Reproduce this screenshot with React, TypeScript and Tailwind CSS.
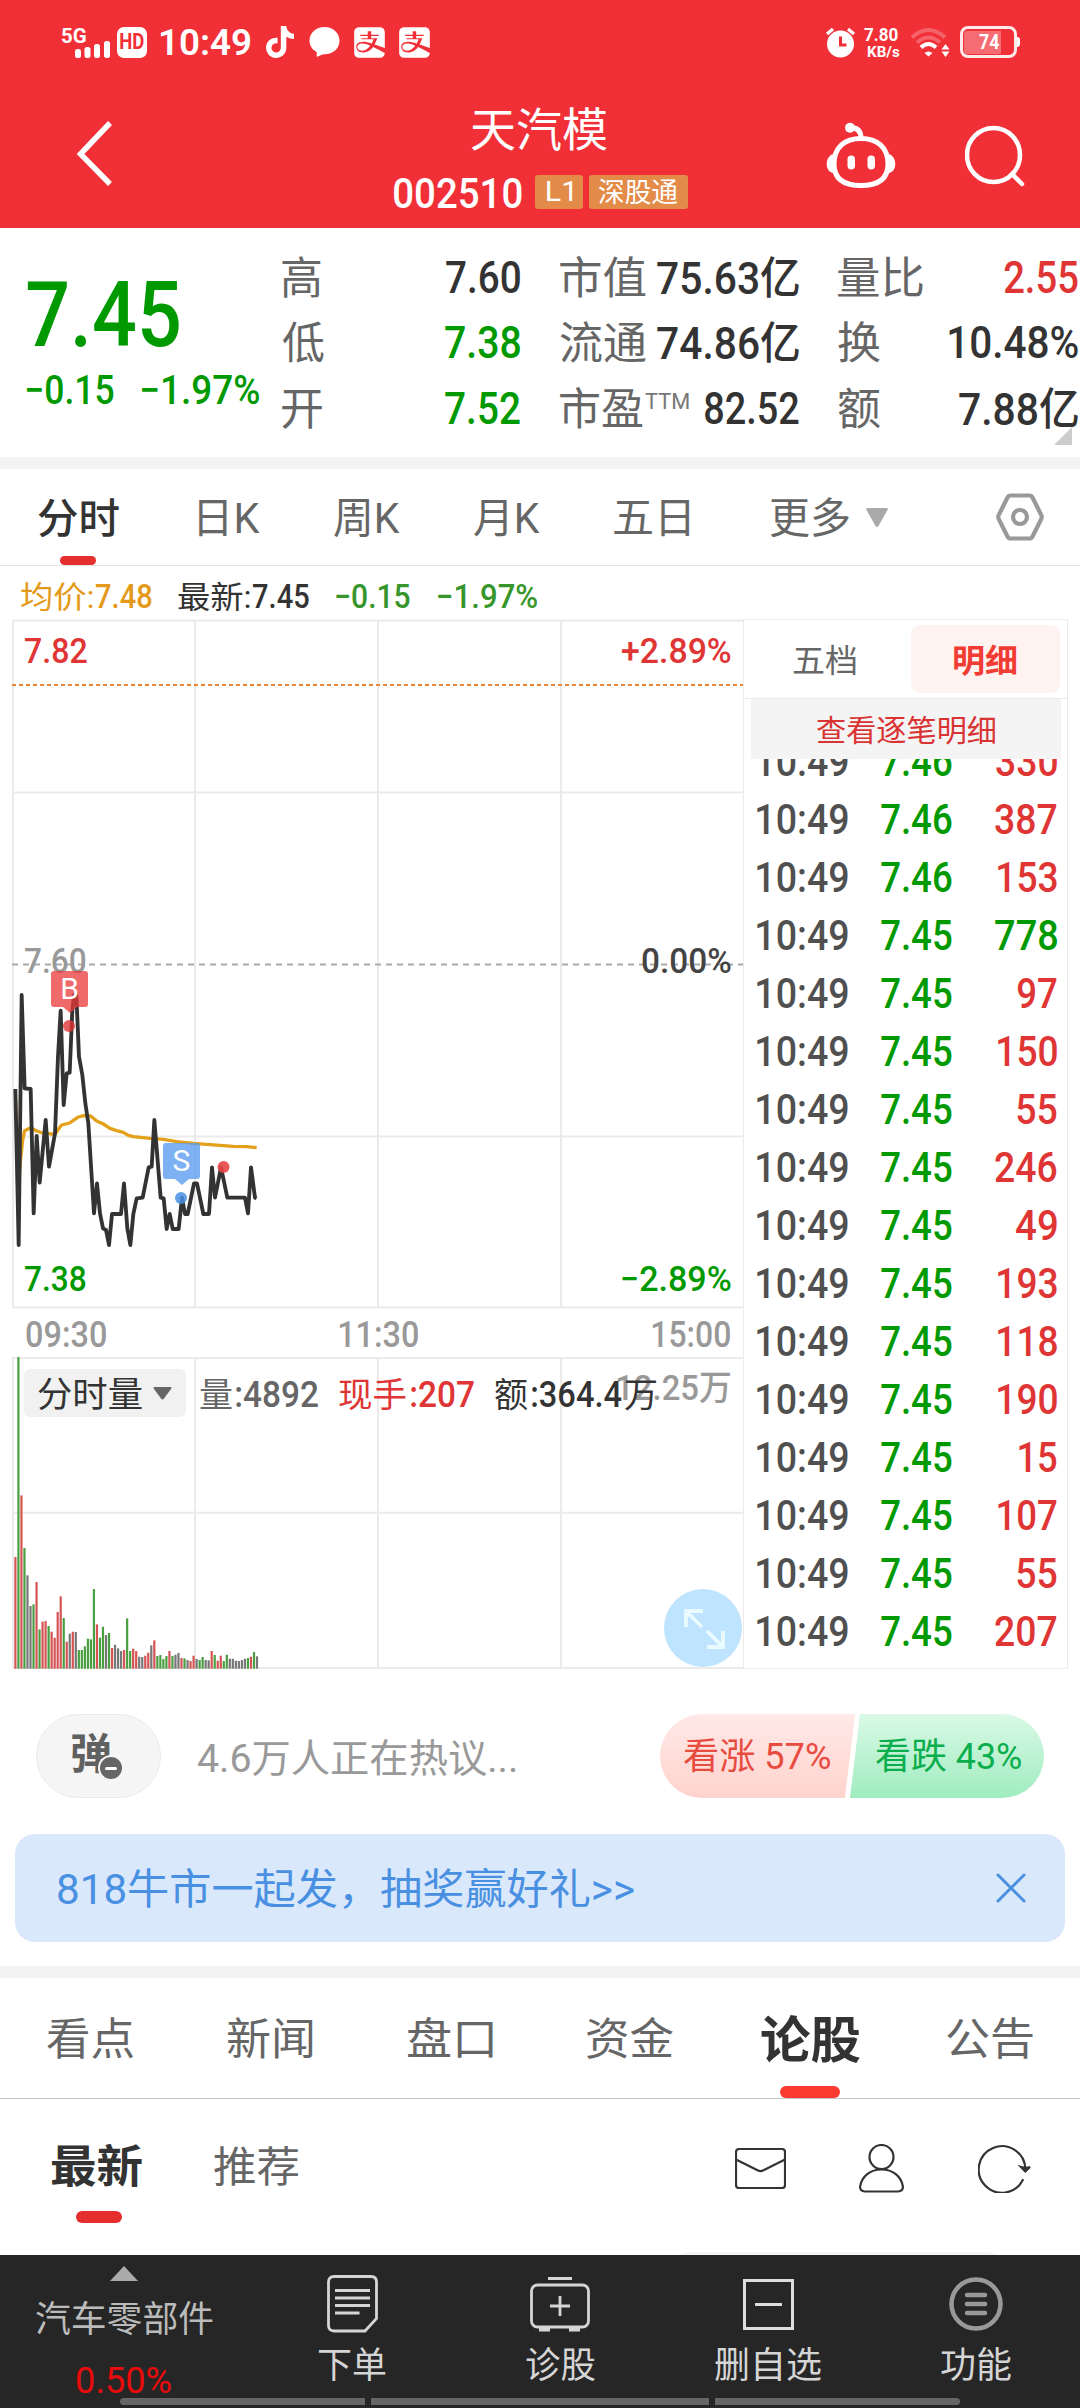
import { useLayoutEffect, useRef, type ReactNode } from "react";
import { FaTiktok } from "react-icons/fa6";
import { FaAlipay } from "react-icons/fa";

/** Text whose visible width is condensed or stretched to `w` pixels. */
function Fit({ w, className = "", children }: { w: number; className?: string; children: string }) {
  const ref = useRef<HTMLSpanElement>(null);
  useLayoutEffect(() => {
    const el = ref.current;
    const ctx = document.createElement("canvas").getContext("2d");
    if (!el || !ctx) return;
    const cs = getComputedStyle(el);
    ctx.font = `${cs.fontWeight} ${cs.fontSize} ${cs.fontFamily}`;
    const m = ctx.measureText(children);
    const k = w / (m.actualBoundingBoxLeft + m.actualBoundingBoxRight);
    // Han glyphs sit slightly higher than digits on the shared baseline.
    const dy = /[\u4e00-\u9fff]/.test(children) ? 2 : 1;
    el.style.transform = `translate(${m.actualBoundingBoxLeft * k}px, ${dy}px) scaleX(${k})`;
  }, [w, children]);
  return (
    <span className={`block shrink-0 leading-none ${className}`} style={{ width: w }}>
      <span ref={ref} className="inline-block origin-left whitespace-nowrap">
        {children}
      </span>
    </span>
  );
}

const GREEN = "text-[#009900]";
const RED = "text-[#e03535]";
const DARK = "text-[#333333]";

function StatusBar() {
  return (
    <div className="flex h-[84px] items-center text-white">
      <div className="relative ml-[62px] h-[32px] w-[49px]">
        <Fit w={24} className="-mt-px text-[20px] font-bold">5G</Fit>
        <svg className="absolute top-[15px] left-[13px]" width="36" height="18" viewBox="0 0 36 18" fill="#fff">
          <rect x="0" y="8" width="6" height="9" rx="2.5" />
          <rect x="9.5" y="6" width="6" height="11" rx="2.5" />
          <rect x="19" y="3" width="6" height="14" rx="2.5" />
          <rect x="29" y="0" width="6" height="17" rx="2.5" />
        </svg>
      </div>
      <div className="ml-[6px] flex h-[31px] w-[30px] items-center justify-center rounded-[7px] bg-white text-[#f12f37]">
        <Fit w={24} className="-mt-[2px] text-[22px] font-bold">HD</Fit>
      </div>
      <Fit w={90} className="-mt-[2px] ml-[14px] text-[37px] font-semibold">10:49</Fit>
      <FaTiktok className="ml-[15px] h-[32px] w-[28px]" />
      <svg className="ml-[15px]" width="31" height="31" viewBox="0 0 31 31" fill="#fff">
        <path d="M15.500 0C24 0 30.500 6 30.500 13.800S24 27.300 15.500 27.300c-1.200 0-2.300.2-3.300.7L7.700 30V25C3.200 22.700.5 18.700.5 13.800.5 6 7 0 15.500 0z" />
      </svg>
      <FaAlipay className="ml-[12px] size-[35px]" />
      <FaAlipay className="ml-[10px] size-[35px]" />
      <svg className="ml-auto" width="31" height="31" viewBox="0 0 31 31" fill="none">
        <circle cx="15.500" cy="17" r="13.500" fill="#fff" />
        <path d="M2 7l6-5M29 7l-6-5" stroke="#fff" strokeWidth="3.400" />
        <path d="M15.500 9.500v8.500h6" stroke="#f12f37" strokeWidth="3" />
      </svg>
      <div className="ml-[8px] flex flex-col items-end gap-[1px]">
        <Fit w={34} className="-mt-px mr-[2px] text-[18px] font-bold">7.80</Fit>
        <Fit w={33} className="text-[15px] font-bold">KB/s</Fit>
      </div>
      <svg className="ml-[10px]" width="40" height="31" viewBox="0 0 40 31" fill="none" stroke="#fff" strokeWidth="4">
        <path d="M2 10.500Q18.500-4.500 35 10.500" opacity=".25" />
        <path d="M7 15.500Q18.500 5.500 30 15.500" opacity=".25" />
        <path d="M11 20.500Q18.500 13.500 26 20.500" />
        <path d="M14.500 26Q18.500 23 22.500 26L18.500 29.500z" fill="#fff" stroke="none" />
        <path d="M31.500 22.500l4-5.500 4 5.500zM31.500 24.500l4 5.500 4-5.500z" fill="#fff" stroke="none" />
      </svg>
      <div className="relative mr-[63px] ml-[10px] flex h-[32px] w-[57px] items-center justify-center rounded-[8px] border-[3px] border-white/90">
        <div className="absolute top-[1.500px] bottom-[1.500px] left-[1px] w-[37px] rounded-l-[3px] bg-white/30" />
        <div className="absolute top-[8px] -right-[6px] h-[10px] w-[3px] rounded-r bg-white" />
        <Fit w={20} className="relative -mt-[2px] text-[20px] font-bold">74</Fit>
      </div>
    </div>
  );
}

function Header() {
  return (
    <header className="h-[228px] bg-[#f12f37]">
      <StatusBar />
      <div className="flex h-[144px] text-white">
        <svg className="mt-[35px] ml-[76px]" width="40" height="70" viewBox="0 0 40 70" fill="none" stroke="#fff" strokeWidth="5.500">
          <path d="M34 4L4.500 35 34 65" />
        </svg>
        <div className="ml-[277px] flex w-[296px] flex-col">
          <Fit w={136} className="mt-[21px] ml-[78px] text-[46px]">天汽模</Fit>
          <div className="mt-[24px] flex h-[34px] items-center">
            <Fit w={128} className="ml-[1px] text-[43px] font-medium">002510</Fit>
            <div className="ml-[13px] flex h-[34px] w-[48px] items-center justify-center rounded-[3px] bg-[#e38b48]">
              <Fit w={25} className="-mt-[2px] text-[28px]">L1</Fit>
            </div>
            <div className="ml-[6px] flex h-[34px] w-[99px] items-center justify-center rounded-[3px] bg-[#e38b48]">
              <Fit w={79} className="-mt-[2px] text-[27px]">深股通</Fit>
            </div>
          </div>
        </div>
        <svg className="mt-[38px] ml-[137px]" width="70" height="66" viewBox="0 0 70 66" fill="none" stroke="#fff" strokeWidth="5">
          <path d="M35 16.500C51 16.500 62 25 62 42 62 57 52 63.500 35 63.500S8 57 8 42C8 25 19 16.500 35 16.500z" />
          <path d="M35 16C35 9 31 5.500 24 5.500" />
          <circle cx="24" cy="5.800" r="5" fill="#fff" stroke="none" />
          <path d="M7.500 32C-1.500 34-1.500 50 7.500 51zM62.500 32C71.500 34 71.500 50 62.500 51z" fill="#fff" stroke="none" />
          <rect x="21.500" y="33.500" width="7.500" height="14" rx="3.700" fill="#fff" stroke="none" />
          <rect x="41.500" y="33.500" width="7.500" height="14" rx="3.700" fill="#fff" stroke="none" />
        </svg>
        <svg className="mt-[40px] ml-[69px]" width="64" height="66" viewBox="0 0 64 66" fill="none" stroke="#fff" strokeWidth="4.500">
          <ellipse cx="28.500" cy="31" rx="26.500" ry="27" />
          <path d="M47 50l10 10" strokeLinecap="round" />
        </svg>
      </div>
    </header>
  );
}

function Stat({ label, lw, value, w, color = DARK, sup }: { label: string; lw: number; value: string; w: number; color?: string; sup?: boolean }) {
  return (
    <div className="flex h-[65.500px] items-center">
      <Fit w={lw} className="text-[44px] text-[#666666]">{label}</Fit>
      {sup && <Fit w={44} className="mb-[14px] ml-[2px] text-[22px] text-[#777777]">TTM</Fit>}
      <Fit w={w} className={`ml-auto text-[44px] font-medium ${color}`}>{value}</Fit>
    </div>
  );
}

function Quote() {
  return (
    <section className="relative flex h-[229px] pt-[16px]">
      <div className="w-[282px] pl-[27px]">
        <Fit w={152} className={`mt-[26px] text-[90px] font-medium ${GREEN}`}>7.45</Fit>
        <div className="mt-[10px] flex">
          <Fit w={87} className={`text-[40px] font-medium ${GREEN}`}>−0.15</Fit>
          <Fit w={117} className={`ml-[28px] text-[40px] font-medium ${GREEN}`}>−1.97%</Fit>
        </div>
      </div>
      <div className="w-[238px]">
        <Stat label="高" lw={39} value="7.60" w={74} />
        <Stat label="低" lw={42} value="7.38" w={75} color={GREEN} />
        <Stat label="开" lw={40} value="7.52" w={75} color={GREEN} />
      </div>
      <div className="ml-[40px] w-[239px]">
        <Stat label="市值" lw={86} value="75.63亿" w={142} />
        <Stat label="流通" lw={86} value="74.86亿" w={142} />
        <Stat label="市盈" lw={83} value="82.52" w={94} sup />
      </div>
      <div className="ml-[39px] w-[240px]">
        <Stat label="量比" lw={85} value="2.55" w={74} color={RED} />
        <Stat label="换" lw={42} value="10.48%" w={129} />
        <Stat label="额" lw={42} value="7.88亿" w={119} />
      </div>
      <svg className="absolute right-[8px] bottom-[12px]" width="18" height="18" viewBox="0 0 18 18" fill="#cccccc">
        <path d="M18 0v18H0z" />
      </svg>
    </section>
  );
}

function PeriodTabs() {
  const tab = "text-[42px] text-[#666666]";
  return (
    <nav className="relative flex h-[97px] items-center border-b border-[#e5e5e5] pl-[38px]">
      <Fit w={81} className={`text-[41px] font-medium ${DARK}`}>分时</Fit>
      <Fit w={61} className={`ml-[80px] ${tab}`}>日K</Fit>
      <Fit w={66} className={`ml-[74px] ${tab}`}>周K</Fit>
      <Fit w={66} className={`ml-[74px] ${tab}`}>月K</Fit>
      <Fit w={75} className={`ml-[74px] ${tab}`}>五日</Fit>
      <Fit w={79} className={`ml-[81px] ${tab}`}>更多</Fit>
      <svg className="ml-[17px]" width="22" height="19" viewBox="0 0 22 19" fill="#aaaaaa">
        <path d="M1.500 0h19q2 0 1 2L12.500 18q-1.500 2-3 0L.5 2q-1-2 1-2z" />
      </svg>
      <svg className="ml-[108px]" width="48" height="48" viewBox="0 0 48 48" fill="none" stroke="#999999" strokeWidth="4.200">
        <path d="M14.500 2.500h19q2 0 3 2L45 21.500q1.500 2.500 0 5L36.500 43.500q-1 2-3 2h-19q-2 0-3-2L3 26.500q-1.500-2.500 0-5L11.500 4.500q1-2 3-2z" />
        <circle cx="24" cy="24" r="7" />
      </svg>
      <div className="absolute bottom-0 left-[60px] h-[9px] w-[36px] rounded-full bg-[#e52f2f]" />
    </nav>
  );
}

const PRICE =
  "46,567 56,1035 65,285 74,565 92,567 101,940 110,708 119,848 137,660 147,800 165,700 174,470 182,332 191,615 200,520 209,518 217,330 222,285 229,285 237,470 247,525 256,610 265,670 282,940 291,850 300,940 309,985 318,990 327,1035 336,942 363,942 372,850 382,985 391,1035 400,942 410,895 428,893 446,802 455,800 463,660 482,893 491,895 500,987 509,942 518,987 536,987 546,893 555,942 563,942 582,850 591,850 610,942 627,942 636,802 645,893 663,802 682,893 735,893 744,940 753,802 765,893 770,895";
const AVERAGE =
  "47,600 56,850 62,775 68,720 74,692 92,683 110,693 128,699 165,703 175,688 185,675 209,669 220,661 235,651 252,647 272,648 290,663 310,672 330,685 350,692 370,697 385,706 400,710 450,715 490,718 530,725 580,730 620,733 700,739 740,740 770,743";

/* One entry per minute: direction (r up, g down, k flat) and height. */
const VOLUMES: [string, number][] = (
  "r335 g935 r520 g362 k280 k188 g193 r260 g118 r141 r143 g128 r111 r93 r170 r217 g152 r81 k105 r111 k110 g56 g56 g67 g90 g88 g239 r133 g93 g126 k101 g107 r62 k72 k61 k53 r56 g151 g53 r60 r53 k36 k35 r39 r48 k70 r85 g38 g41 g29 g38 r53 g38 k42 k47 r32 g31 k26 r23 r39 k29 g26 g35 k26 k25 r53 g41 r24 r39 g23 g42 k30 k30 k24 k23 k26 k30 g32 r36 g50 k37"
)
  .split(" ")
  .map((v) => [v[0], Number(v.slice(1))]);
const BAR: Record<string, string> = { r: "#d65353", g: "#4a9e42", k: "#777777" };

function Label({ className, w, children }: { className: string; w: number; children: string }) {
  return <Fit w={w} className={`absolute font-medium ${className}`}>{children}</Fit>;
}

function Marker({ className, dot, children }: { className: string; dot: string; children: ReactNode }) {
  return (
    <div className={`absolute flex h-[36px] w-[37px] items-center justify-center rounded-[3px] text-[30px] leading-none text-white ${className}`}>
      {children}
      <div className={`absolute top-[36px] left-[12px] border-x-[7px] border-t-[6px] border-x-transparent ${dot}`} />
    </div>
  );
}

function PriceChart() {
  return (
    <div className="relative h-[738px]">
      <svg className="block" width="731" height="690" viewBox="12 619 731 690" fill="none">
        <g stroke="#ebebeb" strokeWidth="2">
          <path d="M12 620.500H743M12 1307.500H743M12 792.500H743M12 1136.500H743M13 620V1308M195 620V1308M378 620V1308M561 620V1308" />
        </g>
        <path d="M12 685H743" stroke="#e8873a" strokeWidth="2" strokeDasharray="4 3" />
        <path d="M12 964.500H743" stroke="#aaaaaa" strokeWidth="2" strokeDasharray="6 5" />
        <g transform="translate(0 900) scale(.33333)" strokeLinejoin="round">
          <polyline points={AVERAGE} stroke="#e3a01b" strokeWidth="10" />
          <polyline points={PRICE} stroke="#333333" strokeWidth="11.500" />
        </g>
        <circle cx="69" cy="1026" r="6" fill="#e03535" opacity=".8" />
        <circle cx="181" cy="1198" r="6" fill="#4a90e2" opacity=".85" />
        <circle cx="223.500" cy="1167" r="6" fill="#e84545" opacity=".9" />
      </svg>
      <Label w={62} className={`top-[14px] left-[13px] text-[35px] ${RED}`}>7.82</Label>
      <Label w={109} className={`top-[14px] left-[610px] text-[35px] ${RED}`}>+2.89%</Label>
      <Label w={61} className="top-[324px] left-[13px] text-[35px] text-[#999999]">7.60</Label>
      <Label w={89} className="top-[324px] left-[630px] text-[35px] text-[#444444]">0.00%</Label>
      <Label w={61} className={`top-[642px] left-[13px] text-[35px] ${GREEN}`}>7.38</Label>
      <Label w={109} className={`top-[642px] left-[610px] text-[35px] ${GREEN}`}>−2.89%</Label>
      <Label w={80} className="top-[697px] left-[14px] text-[36px] text-[#999999]">09:30</Label>
      <Label w={79} className="top-[697px] left-[327px] text-[36px] text-[#999999]">11:30</Label>
      <Label w={78} className="top-[697px] left-[640px] text-[36px] text-[#999999]">15:00</Label>
      <Marker className="top-[352px] left-[39px] bg-[#e93a3a]/75" dot="border-t-[#e93a3a]/75">B</Marker>
      <Marker className="top-[524px] left-[151px] bg-[#5c9df0]/80" dot="border-t-[#5c9df0]/80">S</Marker>
    </div>
  );
}

function VolumeChart() {
  return (
    <div className="relative h-[312px]">
      <svg className="block" width="731" height="312" viewBox="12 1357 731 312" fill="none">
        <path
          d="M12 1358H743M12 1512.700H743M12 1668H743M13 1357V1669M195 1357V1669M378 1357V1669M561 1357V1669"
          stroke="#ebebeb"
          strokeWidth="2"
        />
        {VOLUMES.map(([dir, h], i) => (
          <rect key={i} x={14.300 + i * 3.020} y={1668.700 - h / 3} width="2.200" height={h / 3} fill={BAR[dir]} />
        ))}
      </svg>
      <Label w={113} className="top-[12px] left-[605px] text-[35px] text-[#999999]">12.25万</Label>
      <div className="absolute top-[12px] left-[12px] flex items-center">
        <div className="flex h-[48px] w-[162px] items-center rounded-[6px] bg-[#f1f1f1] pl-[14px]">
          <Fit w={104} className={`text-[35px] ${DARK}`}>分时量</Fit>
          <svg className="ml-[11px]" width="19" height="13" viewBox="0 0 19 13" fill="#666666">
            <path d="M2 0h15q2.500 0 1 2l-7 9.500q-1.500 2-3 0L1 2Q-.5 0 2 0z" />
          </svg>
        </div>
        <Fit w={32} className="ml-[14px] text-[34px] text-[#666666]">量</Fit>
        <Fit w={82} className="ml-[4px] text-[37px] font-medium text-[#666666]">:4892</Fit>
        <Fit w={67} className={`ml-[21px] text-[34px] ${RED}`}>现手</Fit>
        <Fit w={63} className={`ml-[5px] text-[37px] font-medium ${RED}`}>:207</Fit>
        <Fit w={33} className={`ml-[21px] text-[34px] ${DARK}`}>额</Fit>
        <Fit w={90} className={`ml-[4px] text-[37px] font-medium ${DARK}`}>:364.4</Fit>
        <Fit w={31} className={`ml-[3px] text-[34px] ${DARK}`}>万</Fit>
      </div>
      <div className="absolute top-[232px] left-[652px] size-[78px] rounded-full bg-[#bfe4ff]">
        <svg width="78" height="78" viewBox="0 0 78 78" fill="none" stroke="#e9fbff" strokeWidth="3.800">
          <path d="M22 38V22h17M23 23l15 15M59 42v16H43M58 57L43 42" />
        </svg>
      </div>
    </div>
  );
}

const TRADES: [string, number, number, boolean?][] = [
  ["7.46", 330, 61], ["7.46", 387, 62], ["7.46", 153, 59], ["7.45", 778, 62, true], ["7.45", 97, 40],
  ["7.45", 150, 59], ["7.45", 55, 40], ["7.45", 246, 62], ["7.45", 49, 41], ["7.45", 193, 59],
  ["7.45", 118, 59], ["7.45", 190, 59], ["7.45", 15, 38], ["7.45", 107, 59], ["7.45", 55, 40], ["7.45", 207, 62],
];

function TradePanel() {
  return (
    <aside className="flex h-[1050px] w-[325px] flex-col border border-[#ebebeb]">
      <div className="flex h-[79px] items-center border-b border-[#ebebeb]">
        <Fit w={63} className="ml-[49px] text-[32px] text-[#666666]">五档</Fit>
        <div className="ml-[55px] flex h-[68px] w-[149px] items-center justify-center rounded-[9px] bg-[#fff3f2]">
          <Fit w={63} className="text-[32px] font-bold text-[#f03c32]">明细</Fit>
        </div>
      </div>
      <div className="mr-[6px] ml-[7px] flex h-[60px] shrink-0 items-center justify-center bg-[#f4f4f4]">
        <Fit w={178} className="text-[30px] text-[#d93333]">查看逐笔明细</Fit>
      </div>
      <div className="flex-1 overflow-hidden">
        <div className="-mt-[27px]">
          {TRADES.map(([price, vol, w, down], i) => (
            <div key={i} className="flex h-[58px] items-center pr-[10px] pl-[13px] text-[42px] font-medium">
              <Fit w={91} className="text-[#505050]">10:49</Fit>
              <Fit w={71} className={`ml-[33px] ${GREEN}`}>{price}</Fit>
              <Fit w={w} className={`ml-auto ${down ? GREEN : RED}`}>{String(vol)}</Fit>
            </div>
          ))}
        </div>
      </div>
    </aside>
  );
}

function ChartArea() {
  return (
    <>
      <div className="flex h-[53px] items-center pt-[5px] pl-[21px]">
        <Fit w={72} className="text-[31px] text-[#e39a1b]">均价:</Fit>
        <Fit w={56} className="ml-[3px] text-[33px] font-medium text-[#e39a1b]">7.48</Fit>
        <Fit w={72} className={`ml-[26px] text-[31px] ${DARK}`}>最新:</Fit>
        <Fit w={56} className={`ml-[3px] text-[33px] font-medium ${DARK}`}>7.45</Fit>
        <Fit w={74} className="ml-[27px] text-[33px] font-medium text-[#37962b]">−0.15</Fit>
        <Fit w={99} className="ml-[28px] text-[33px] font-medium text-[#37962b]">−1.97%</Fit>
      </div>
      <div className="flex h-[1050px] pl-[12px]">
        <div className="w-[731px]">
          <PriceChart />
          <VolumeChart />
        </div>
        <TradePanel />
      </div>
    </>
  );
}

function Discussion() {
  return (
    <div className="mt-[45px] flex h-[84px] items-center pl-[36px]">
      <div className="relative flex h-full w-[125px] items-center rounded-full border border-[#ebebeb] bg-[#f5f5f5] pl-[35px]">
        <Fit w={39} className="-mt-[6px] text-[42px] font-bold text-[#606060]">弹</Fit>
        <div className="absolute top-[40px] left-[61px] flex size-[26px] items-center justify-center rounded-full border-[2.500px] border-[#f5f5f5] bg-[#666666]">
          <div className="h-[3px] w-[12px] rounded bg-white" />
        </div>
      </div>
      <Fit w={318} className="mt-[2px] ml-[37px] text-[39px] text-[#999999]">4.6万人正在热议...</Fit>
      <div className="ml-[144px] flex h-full w-[384px] overflow-hidden rounded-full">
        <div className="flex w-[195px] items-center bg-linear-to-b from-[#ffe9e8] to-[#ffd3cd] pl-[24px] [clip-path:polygon(0_0,100%_0,calc(100%-10px)_100%,0_100%)]">
          <Fit w={146} className="-mt-[2px] text-[36px] text-[#e84c40]">看涨 57%</Fit>
        </div>
        <div className="-ml-[5px] flex w-[194px] items-center bg-linear-to-b from-[#d9f9e6] to-[#9fecc0] pl-[26px] [clip-path:polygon(10px_0,100%_0,100%_100%,0_100%)]">
          <Fit w={145} className="-mt-[2px] text-[36px] text-[#0aae4c]">看跌 43%</Fit>
        </div>
      </div>
    </div>
  );
}

function Banner() {
  return (
    <div className="mx-[15px] mt-[36px] mb-[24px] flex h-[108px] items-center rounded-[20px] bg-[#d9e8fb] pr-[39px] pl-[43px]">
      <Fit w={576} className="text-[42px] text-[#4a90e2]">818牛市一起发，抽奖赢好礼&gt;&gt;</Fit>
      <svg className="ml-auto" width="30" height="30" viewBox="0 0 30 30" fill="none" stroke="#4a90e2" strokeWidth="3" strokeLinecap="round">
        <path d="M2 2l26 26M28 2L2 28" />
      </svg>
    </div>
  );
}

function ContentTabs() {
  const tabs = ["看点", "新闻", "盘口", "资金", "论股", "公告"];
  return (
    <nav className="flex h-[121px] border-b border-[#c4c4c4]">
      {tabs.map((t) =>
        t === "论股" ? (
          <div key={t} className="relative flex w-[180px] justify-center pt-[36px]">
            <Fit w={99} className={`text-[50px] font-bold ${DARK}`}>{t}</Fit>
            <div className="absolute bottom-0 left-[60px] h-[12px] w-[60px] rounded-[6px] bg-[#fb3b30]" />
          </div>
        ) : (
          <div key={t} className="flex w-[180px] justify-center pt-[38px]">
            <Fit w={86} className="text-[44px] text-[#666666]">{t}</Fit>
          </div>
        ),
      )}
    </nav>
  );
}

function FeedTabs() {
  return (
    <div className="relative flex h-[156px] overflow-hidden pl-[51px]">
      <div className="w-[91px]">
        <Fit w={91} className={`mt-[44px] text-[45px] font-bold ${DARK}`}>最新</Fit>
        <div className="mt-[23px] ml-[25px] h-[12px] w-[46px] rounded-[6px] bg-[#e52f2f]" />
      </div>
      <Fit w={84} className="mt-[46px] ml-[72px] text-[42px] text-[#666666]">推荐</Fit>
      <svg className="mt-[49px] ml-[437px]" width="51" height="41" viewBox="0 0 51 41" fill="none" stroke="#333333" strokeWidth="2.200">
        <rect x="1" y="1" width="49" height="39" rx="3" />
        <path d="M1 11.500L23 22.500q2.500 1.200 5 0L50 11.500" />
      </svg>
      <svg className="mt-[45px] ml-[73px]" width="45" height="49" viewBox="0 0 45 49" fill="none" stroke="#333333" strokeWidth="2.200">
        <circle cx="22.500" cy="13" r="12" />
        <path d="M22.500 25.500C11 25.500 3 32.500 1.200 42 .7 45.500 2.500 47.500 6 47.500H39C42.500 47.500 44.300 45.500 43.800 42 42 32.500 34 25.500 22.500 25.500z" />
      </svg>
      <svg className="mt-[45px] ml-[74px]" width="53" height="49" viewBox="0 0 53 49" fill="none" stroke="#333333" strokeWidth="2.200">
        <path d="M44.800 36A23.300 23.300 0 1 1 47.300 24.500" strokeLinecap="round" />
        <path d="M43 23q5 1.500 9 0l-4.700 4.500z" fill="#333333" />
      </svg>
      <div className="absolute -bottom-[57px] left-[665px] h-[60px] w-[347px] rounded-[26px] bg-[#f5f5f5]" />
    </div>
  );
}

function NavItem({ label, w, children }: { label: string; w: number; children: ReactNode }) {
  return (
    <div className="flex w-[208px] flex-col items-center">
      <div className="mt-[17px] flex h-[64px] items-center">{children}</div>
      <Fit w={w} className="mt-[10px] text-[36px] text-[#d5d5d5]">{label}</Fit>
    </div>
  );
}

function BottomBar() {
  return (
    <footer className="relative flex h-[153px] bg-[#262626]">
      <div className="flex w-[248px] flex-col items-center">
        <svg className="mt-[11px]" width="28" height="15" viewBox="0 0 28 15" fill="#aaaaaa">
          <path d="M14 0l14 15H0z" />
        </svg>
        <Fit w={177} className="mt-[19px] text-[36px] text-[#bbbbbb]">汽车零部件</Fit>
        <Fit w={94} className="mt-[25px] text-[37px] text-[#e80c0c]">0.50%</Fit>
      </div>
      <NavItem label="下单" w={68}>
        <svg width="51" height="58" viewBox="0 0 51 58" fill="none" stroke="#d5d5d5" strokeWidth="2.800">
          <path d="M7 1.500H44Q49.500 1.500 49.500 7V43.500L38 56H7Q1.500 56 1.500 50.500V7Q1.500 1.500 7 1.500z" />
          <path d="M8 15.500H43M8 23H43M8 30.500H43M8 38H32.500" />
        </svg>
      </NavItem>
      <NavItem label="诊股" w={69}>
        <svg width="60" height="56" viewBox="0 0 60 56" fill="none" stroke="#d5d5d5" strokeWidth="2.800">
          <path d="M18 2.500H42M20 30H40M30 20V40" />
          <rect x="1.500" y="9" width="57" height="42" rx="6" />
          <path d="M9 53.500H20M39 53.500H50" strokeWidth="4" />
        </svg>
      </NavItem>
      <NavItem label="删自选" w={106}>
        <svg width="51" height="51" viewBox="0 0 51 51" fill="none" stroke="#dddddd" strokeWidth="3">
          <rect x="1.500" y="1.500" width="48" height="48" />
          <path d="M12 25.500H39" />
        </svg>
      </NavItem>
      <NavItem label="功能" w={70}>
        <svg width="54" height="54" viewBox="0 0 54 54" fill="none" stroke="#999999" strokeWidth="4.500">
          <circle cx="27" cy="27" r="24.500" />
          <path d="M18 18H36M18 27H36M18 36H36" strokeLinecap="round" />
        </svg>
      </NavItem>
      <div className="absolute bottom-[3px] left-[120px] flex h-[7px] w-[840px] gap-[6px] *:bg-[#666666]">
        <div className="w-[245px] rounded-l-full" />
        <div className="w-[338px]" />
        <div className="w-[245px] rounded-r-full" />
      </div>
    </footer>
  );
}

export default function App() {
  return (
    <div className="flex h-[2408px] w-[1080px] flex-col overflow-hidden bg-white font-[Roboto,'Noto_Sans_CJK_SC',sans-serif]">
      <Header />
      <Quote />
      <div className="h-[12px] bg-[#f4f4f4]" />
      <PeriodTabs />
      <ChartArea />
      <Discussion />
      <Banner />
      <div className="h-[12px] shrink-0 bg-[#f4f4f4]" />
      <ContentTabs />
      <FeedTabs />
      <BottomBar />
    </div>
  );
}
